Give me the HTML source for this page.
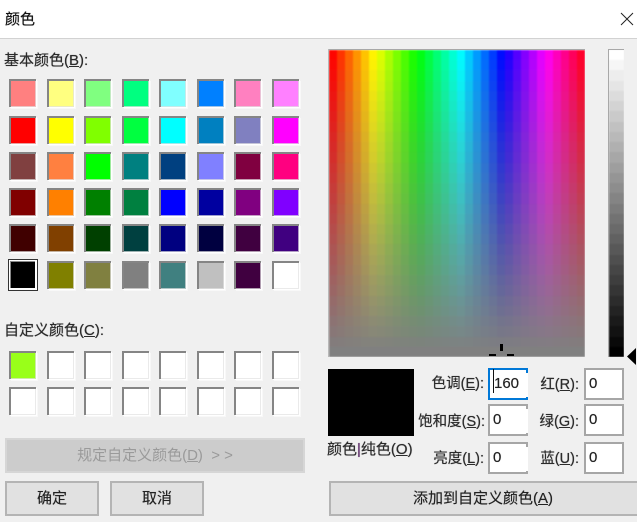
<!DOCTYPE html>
<html><head><meta charset="utf-8"><style>
html,body{margin:0;padding:0;background:#f0f0f0}
body{width:637px;height:522px;position:relative;overflow:hidden;font-family:"Liberation Sans","Noto Sans CJK SC",sans-serif;font-size:15px;color:#2b2b2b}
#w{position:absolute;left:0;top:0;width:637px;height:522px;overflow:hidden;background:#f0f0f0;filter:blur(.3px)}
#t{position:absolute;left:0;top:0;width:637px;height:38px;background:#fff;border-bottom:1px solid #d2d2d2}
.a{position:absolute;white-space:nowrap;line-height:20px;text-shadow:0 0 .6px #444}
.l{font-size:14.5px}
.r{position:absolute;left:9px;display:flex;gap:10.55px}
.s{width:25px;height:26px;border-top:2px solid #858585;border-left:2px solid #858585;box-shadow:inset -1px -1px 0 rgba(225,225,225,.7),1px 1px 0 #fff,2px 2px 0 #f8f8f8}
u{text-decoration:underline;text-underline-offset:1px}
.i{position:absolute;width:36px;height:28px;background:#fff;border:2px solid #a6a6a6;border-right-color:#fff;font-size:15px;line-height:25px;color:#222;text-shadow:0 0 .5px #444}
.i span{position:absolute;left:3px;top:1px}
.i b{position:absolute;right:-2px;top:-2px;width:2px;height:5px;background:#a6a6a6}
.i i{position:absolute;right:-2px;bottom:-2px;width:2px;height:3px;background:#a6a6a6}
.i2{border-right:2px solid #a6a6a6}
.b{position:absolute;box-sizing:border-box;background:#e1e1e1;border:2px solid #b4b4b4;text-align:center;font-size:15px;color:#222;text-shadow:0 0 .5px #444}
.c{position:absolute;overflow:hidden}
canvas{display:block;filter:blur(.9px)}
</style></head><body><div id="w">
<div id="t"></div>
<div class="a" style="left:5px;top:10px;color:#111">颜色</div>
<svg style="position:absolute;left:620px;top:12px" width="14" height="14"><path d="M1 1L13 13M13 1L1 13" stroke="#222" stroke-width="1" fill="none"/></svg>

<div class="a" style="left:4px;top:51px">基本颜色(<u>B</u>):</div>
<div class="r" style="top:79px"><div class="s" style="background:#ff8080"></div><div class="s" style="background:#ffff80"></div><div class="s" style="background:#80ff80"></div><div class="s" style="background:#00ff80"></div><div class="s" style="background:#80ffff"></div><div class="s" style="background:#0080ff"></div><div class="s" style="background:#ff80c0"></div><div class="s" style="background:#ff80ff"></div></div>
<div class="r" style="top:116px"><div class="s" style="background:#ff0000"></div><div class="s" style="background:#ffff00"></div><div class="s" style="background:#80ff00"></div><div class="s" style="background:#00ff40"></div><div class="s" style="background:#00ffff"></div><div class="s" style="background:#0080c0"></div><div class="s" style="background:#8080c0"></div><div class="s" style="background:#ff00ff"></div></div>
<div class="r" style="top:152px"><div class="s" style="background:#804040"></div><div class="s" style="background:#ff8040"></div><div class="s" style="background:#00ff00"></div><div class="s" style="background:#008080"></div><div class="s" style="background:#004080"></div><div class="s" style="background:#8080ff"></div><div class="s" style="background:#800040"></div><div class="s" style="background:#ff0080"></div></div>
<div class="r" style="top:188px"><div class="s" style="background:#800000"></div><div class="s" style="background:#ff8000"></div><div class="s" style="background:#008000"></div><div class="s" style="background:#008040"></div><div class="s" style="background:#0000ff"></div><div class="s" style="background:#0000a0"></div><div class="s" style="background:#800080"></div><div class="s" style="background:#8000ff"></div></div>
<div class="r" style="top:224px"><div class="s" style="background:#400000"></div><div class="s" style="background:#804000"></div><div class="s" style="background:#004000"></div><div class="s" style="background:#004040"></div><div class="s" style="background:#000080"></div><div class="s" style="background:#000040"></div><div class="s" style="background:#400040"></div><div class="s" style="background:#400080"></div></div>
<div class="r" style="top:261px"><div class="s" style="background:#000"></div><div class="s" style="background:#808000"></div><div class="s" style="background:#808040"></div><div class="s" style="background:#808080"></div><div class="s" style="background:#408080"></div><div class="s" style="background:#c0c0c0"></div><div class="s" style="background:#400040"></div><div class="s" style="background:#fff"></div></div>
<div style="position:absolute;left:8px;top:259px;width:30px;height:32px;box-sizing:border-box;border:1px solid #333;background:#fff"><div style="position:absolute;left:1px;top:1px;right:2px;bottom:2px;background:#000;border-top:1px solid #888;border-left:1px solid #888"></div></div>

<div class="a" style="left:4px;top:321px">自定义颜色(<u>C</u>):</div>
<div class="r" style="top:351px"><div class="s" style="background:#99ff19"></div><div class="s" style="background:#fff"></div><div class="s" style="background:#fff"></div><div class="s" style="background:#fff"></div><div class="s" style="background:#fff"></div><div class="s" style="background:#fff"></div><div class="s" style="background:#fff"></div><div class="s" style="background:#fff"></div></div>
<div class="r" style="top:387px"><div class="s" style="background:#fff"></div><div class="s" style="background:#fff"></div><div class="s" style="background:#fff"></div><div class="s" style="background:#fff"></div><div class="s" style="background:#fff"></div><div class="s" style="background:#fff"></div><div class="s" style="background:#fff"></div><div class="s" style="background:#fff"></div></div>

<div class="b" style="left:5px;top:438px;width:300px;height:35px;background:#cccccc;border-color:#d6d6d6;color:#9a9a9a;line-height:31px;text-shadow:none">规定自定义颜色(<u>D</u>) &nbsp;&gt; &gt;</div>
<div class="b" style="left:5px;top:481px;width:94px;height:35px;line-height:31px">确定</div>
<div class="b" style="left:110px;top:481px;width:94px;height:35px;line-height:31px">取消</div>

<div class="c" style="left:329px;top:50px;width:256px;height:307px"><canvas id="p" width="256" height="307"></canvas></div>
<div style="position:absolute;left:328px;top:49px;width:257px;height:1px;background:#a8a8a8"></div>
<div style="position:absolute;left:328px;top:49px;width:1px;height:308px;background:#b8b8b8"></div>
<div style="position:absolute;left:500px;top:344px;width:3px;height:7px;background:#000"></div>
<div style="position:absolute;left:489px;top:354px;width:7px;height:2px;background:#000"></div>
<div style="position:absolute;left:507px;top:354px;width:7px;height:2px;background:#000"></div>

<div class="c" style="left:609px;top:50px;width:15px;height:307px"><canvas id="l" width="15" height="307" style="filter:blur(.5px)"></canvas></div>
<div style="position:absolute;left:608px;top:49px;width:16px;height:1px;background:#a8a8a8"></div>
<div style="position:absolute;left:608px;top:49px;width:1px;height:308px;background:#a8a8a8"></div>
<svg style="position:absolute;left:627px;top:348px" width="10" height="17"><path d="M0 8.5L9 0V17Z" fill="#000"/></svg>

<div style="position:absolute;left:328px;top:369px;width:86px;height:67px;background:#000"></div>
<div class="a" style="left:327px;top:440px">颜色<span style="color:#5a1f6a">|</span>纯色(<u>O</u>)</div>

<div class="a l" style="right:153px;top:374px">色调(<u>E</u>):</div>
<div class="a l" style="right:152px;top:412px">饱和度(<u>S</u>):</div>
<div class="a l" style="right:153px;top:449px">亮度(<u>L</u>):</div>
<div class="a l" style="right:58px;top:375px">红(<u>R</u>):</div>
<div class="a l" style="right:58px;top:412px">绿(<u>G</u>):</div>
<div class="a l" style="right:58px;top:449px">蓝(<u>U</u>):</div>

<div class="i" style="left:488px;top:368px;border-color:#0078d7;border-right-color:#fff"><b style="background:#0078d7"></b><i style="background:#0078d7"></i><span style="left:4px">160</span><div style="position:absolute;left:3px;top:-1px;width:1px;height:24px;background:#111"></div></div>
<div class="i" style="left:488px;top:404px"><b></b><i></i><span>0</span></div>
<div class="i" style="left:488px;top:442px"><b></b><i></i><span>0</span></div>
<div class="i i2" style="left:584px;top:368px"><span>0</span></div>
<div class="i i2" style="left:584px;top:404px"><span>0</span></div>
<div class="i i2" style="left:584px;top:442px"><span>0</span></div>

<div class="b" style="left:329px;top:481px;width:310px;height:35px;line-height:31px;padding-right:2px">添加到自定义颜色(<u>A</u>)</div>
</div>
<script>
var c=document.getElementById('p').getContext('2d');
for(var x=0;x<32;x++)for(var y=0;y<30;y++){
  var s=100-Math.round(y*100/29);
  c.fillStyle='hsl('+(x*11.25+1)+','+s+'%,50%)';
  c.fillRect(x*8,Math.round(y*307/30),8,11);
}
var d=document.getElementById('l').getContext('2d');
for(var i=0;i<30;i++){
  var v=Math.round(255-i*255/29);
  d.fillStyle='rgb('+v+','+v+','+v+')';
  d.fillRect(0,Math.round(i*307/30),15,11);
}
</script>
</body></html>
